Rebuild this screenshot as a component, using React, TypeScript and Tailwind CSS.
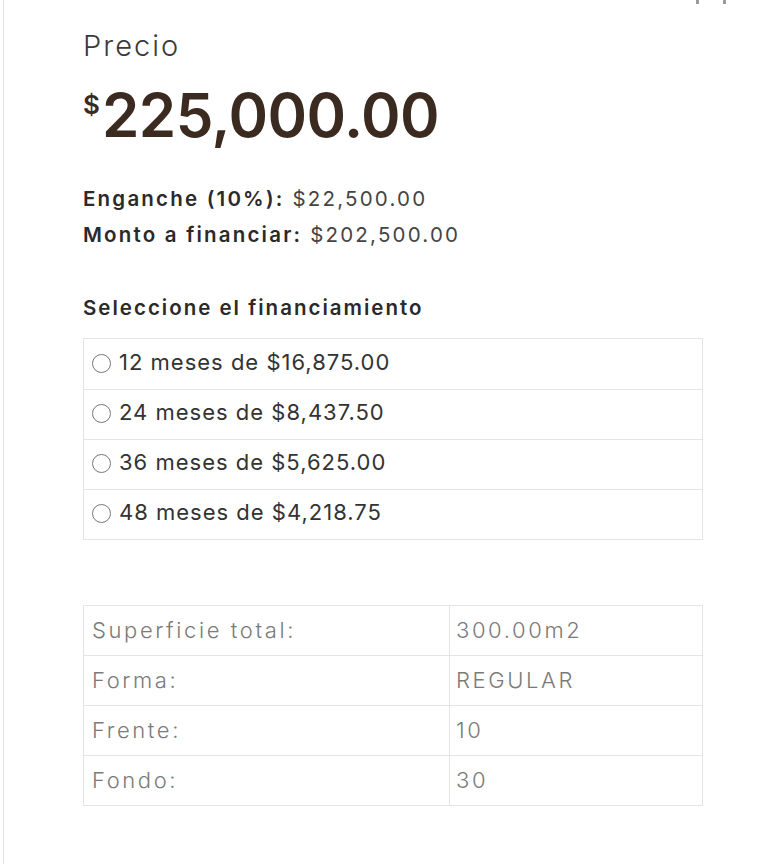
import React from 'react';

const plans = [
  { months: 12, amount: '$16,875.00' },
  { months: 24, amount: '$8,437.50' },
  { months: 36, amount: '$5,625.00' },
  { months: 48, amount: '$4,218.75' },
];

const specs = [
  ['Superficie total:', '300.00m2'],
  ['Forma:', 'REGULAR'],
  ['Frente:', '10'],
  ['Fondo:', '30'],
];

const App: React.FC = () => {
  return (
    <div className="min-h-[864px] w-[781px] bg-white font-['Inter',sans-serif]">
      <div className="relative ml-[3px] min-h-[864px] border-l border-[#e3e3e3] pl-[79px] pr-[78px]">
        <div className="absolute right-[55px] top-0 flex gap-[24px]">
          <span className="h-[4px] w-[3px] bg-[#9a9a9a]" />
          <span className="h-[4px] w-[3px] bg-[#9a9a9a]" />
        </div>

        <div className="pt-[28px] text-[29px] leading-[36px] font-light tracking-[2px] text-[#3a3a3a]">Precio</div>

        <div className="mt-[18px] flex items-start font-semibold text-[#3b2a1f]">
          <span className="mt-[8px] mr-[3px] text-[26px] leading-[30px]">$</span>
          <span className="-ml-[1px] text-[60px] leading-[66px] tracking-[-0.5px]">225,000.00</span>
        </div>

        <div className="mt-[33px] text-[20.5px] leading-[36px] tracking-[2.2px] text-[#444]">
          <div>
            <span className="font-semibold text-[#2a2a2a]">Enganche (10%):</span> $22,500.00
          </div>
          <div>
            <span className="font-semibold text-[#2a2a2a]">Monto a financiar:</span> $202,500.00
          </div>
        </div>

        <div className="mt-[40px] text-[20.5px] leading-[30px] font-semibold tracking-[2px] text-[#2a2a2a]">
          Seleccione el financiamiento
        </div>

        <div className="mt-[15px] border border-[#e4e4e4]">
          {plans.map((p, i) => (
            <label
              key={p.months}
              className={`flex h-[50px] items-center gap-[8px] pl-[8px] text-[22px] tracking-[1px] text-[#333] ${
                i > 0 ? 'border-t border-[#e4e4e4]' : ''
              }`}
            >
              <span className="-mt-[2px] h-[19px] w-[19px] shrink-0 rounded-full border-[1.5px] border-[#777] bg-white" />
              <span className="-mt-[4px]">
                {p.months} meses de {p.amount}
              </span>
            </label>
          ))}
        </div>

        <table className="mt-[65px] w-full border-collapse text-[22px] tracking-[2.6px] text-[#7a7a7a]">
          <tbody>
            {specs.map(([k, v]) => (
              <tr key={k} className="h-[50px]">
                <td className="w-[366px] border border-[#e4e4e4] pl-[8px] font-light">{k}</td>
                <td className="border border-[#e4e4e4] pl-[6px] font-light">{v}</td>
              </tr>
            ))}
          </tbody>
        </table>
      </div>
    </div>
  );
};

export default App;
